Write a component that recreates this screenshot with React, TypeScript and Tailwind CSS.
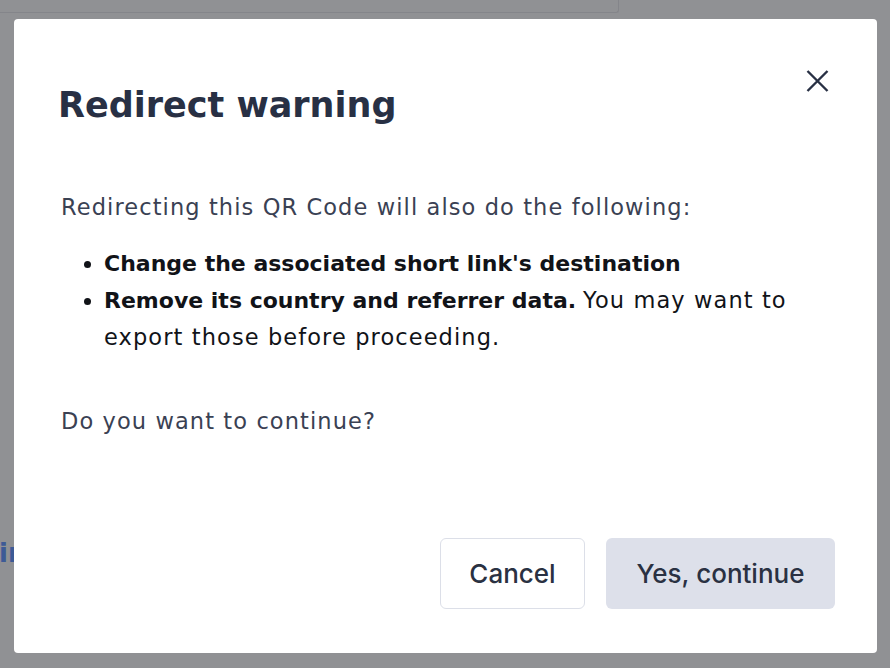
export default function App() {
  return (
    <div
      className="relative h-[668px] w-[890px] overflow-hidden bg-[#909194]"
      style={{ fontFamily: '"DejaVu Sans", Inter, sans-serif' }}
    >
      {/* Page behind the overlay */}
      <div className="h-[13px] w-[619px] rounded-br-[3px] border-b border-r border-[#84858a]" />
      <div className="-ml-[1px] mt-[522px] text-[26px] font-semibold leading-[36px] text-[#3d5a96]">ir</div>

      {/* Modal */}
      <div className="absolute left-[14px] top-[19px] flex h-[634px] w-[863px] flex-col rounded-[4px] bg-white">
        <button className="absolute left-[792px] top-[51px] text-[#283044]">
          <svg width="23" height="22" viewBox="0 0 23 22" fill="none" stroke="currentColor" strokeWidth="2.4">
            <path d="M1.5 1 L21.5 21 M21.5 1 L1.5 21" />
          </svg>
        </button>

        <h1 className="mt-[64px] px-[44px] text-[35px] font-bold leading-[44px] text-[#283044]">
          Redirect warning
        </h1>

        <div className="mt-[62px] px-[47px] text-[22.5px] leading-[36px] text-[#3a4153]">
          <p className="tracking-[1.1px]">Redirecting this QR Code will also do the following:</p>
          <ul className="mt-[21px] list-disc pl-[43px] text-[22px] text-[#111318]">
            <li className="font-bold">Change the associated short link's destination</li>
            <li>
              <span className="font-bold">Remove its country and referrer data.</span>{' '}
              <span className="text-[22.5px] tracking-[1.1px]">You may want to export those before proceeding.</span>
            </li>
          </ul>
          <p className="mt-[47px] tracking-[1.1px]">Do you want to continue?</p>
        </div>

        <div
          className="mt-auto mb-[44px] flex justify-end gap-[21px] px-[42px]"
          style={{ fontFamily: 'Inter, "DejaVu Sans", sans-serif' }}
        >
          <button className="h-[71px] w-[145px] rounded-[6px] border border-[#dcdfe8] bg-white text-[26px] font-medium text-[#2a3142]">
            Cancel
          </button>
          <button className="h-[71px] w-[229px] rounded-[6px] bg-[#dde0ea] text-[26px] font-medium text-[#2a3142]">
            Yes, continue
          </button>
        </div>
      </div>
    </div>
  )
}
